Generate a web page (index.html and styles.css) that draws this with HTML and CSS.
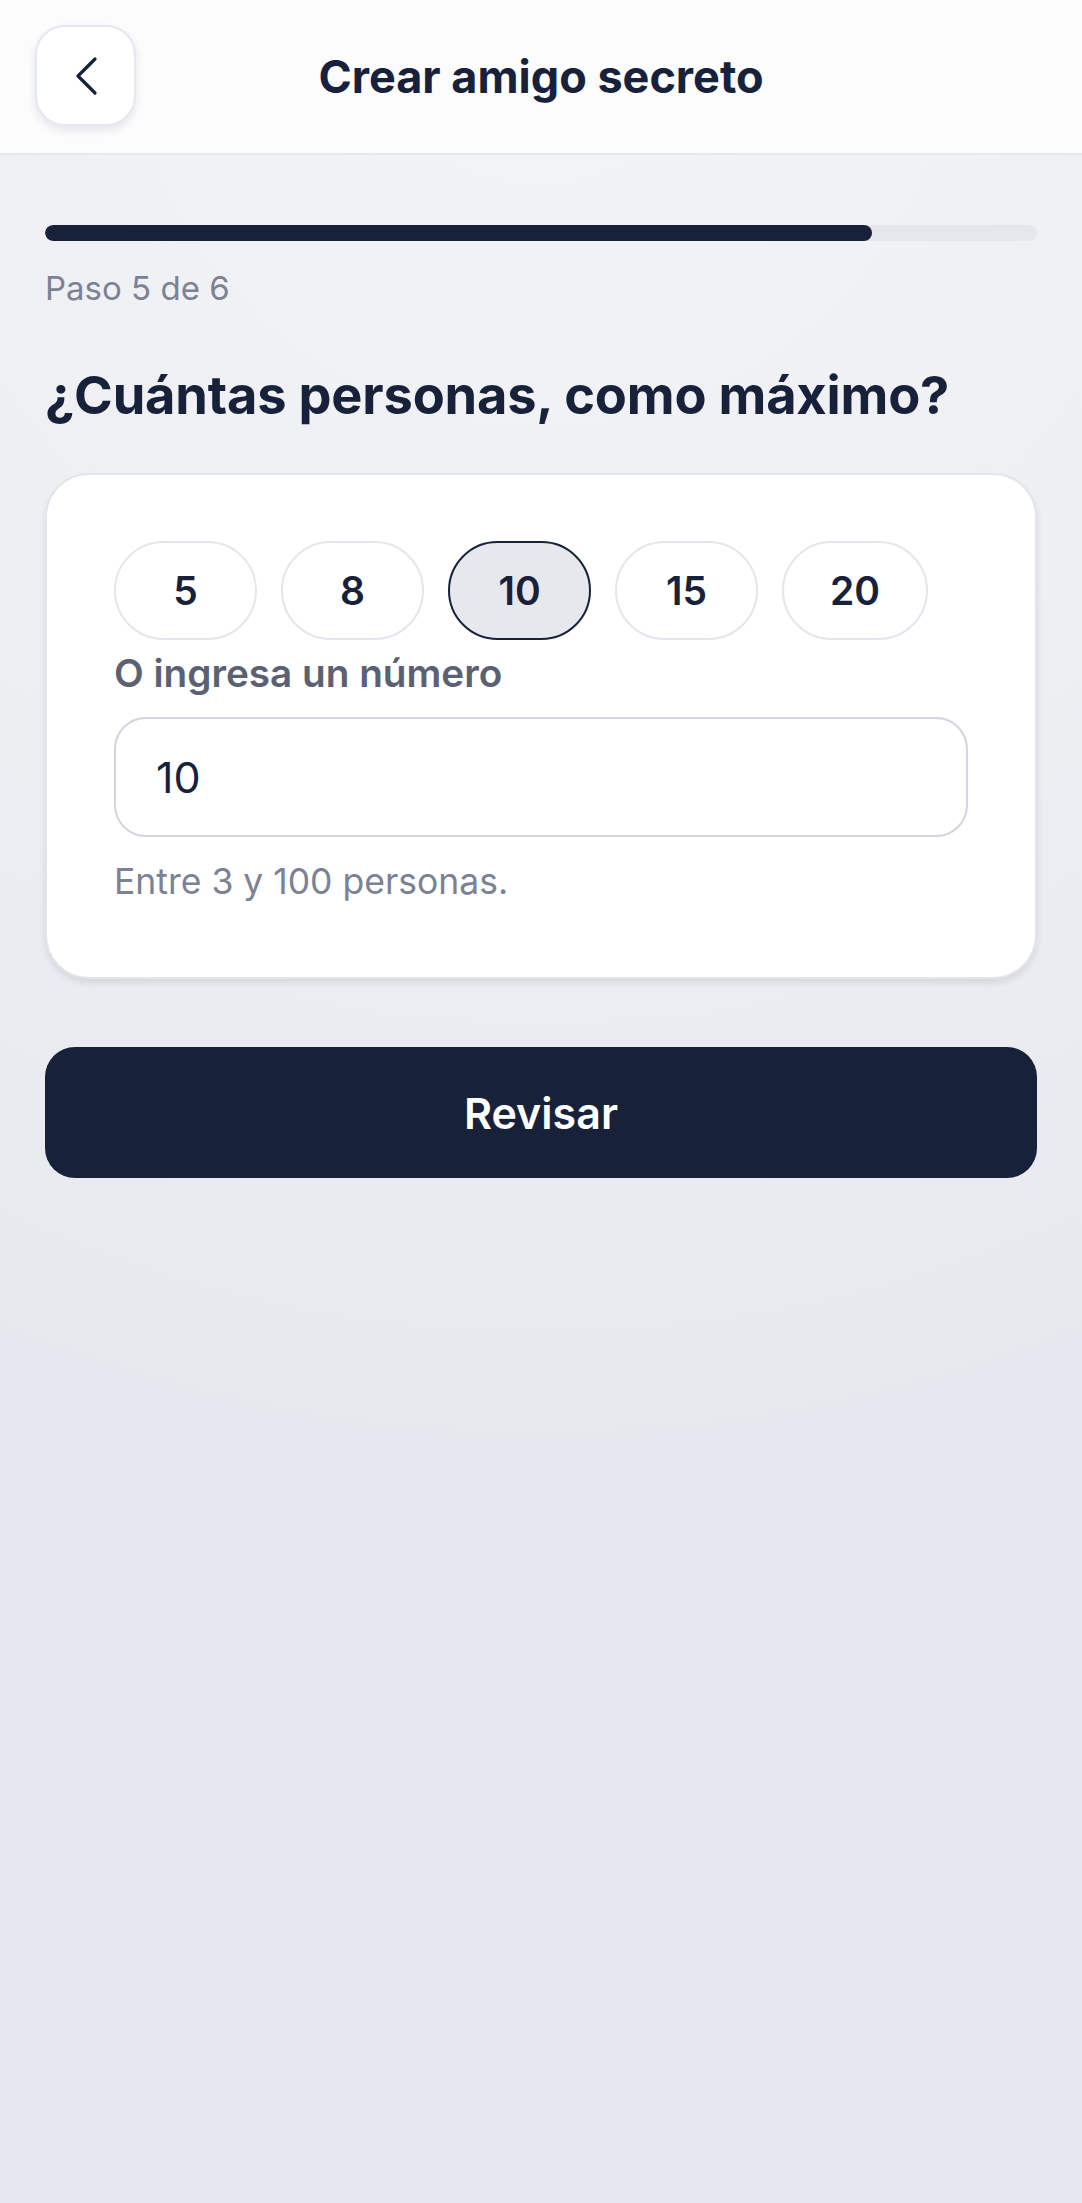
FILE: index.html
```html
<!DOCTYPE html>
<html lang="es">
<head>
    <meta charset="UTF-8">
    <meta name="viewport" content="width=device-width, initial-scale=1.0">
    <title>Crear amigo secreto</title>
    <link rel="stylesheet" href="styles.css">
</head>
<body>
    <header class="topbar">
        <button class="back-btn" type="button" aria-label="Volver">
            <svg width="30" height="40" viewBox="0 0 30 40" fill="none">
                <path d="M24 3 L7 20 L24 37" stroke="#18213a" stroke-width="3.2" stroke-linecap="round" stroke-linejoin="round"/>
            </svg>
        </button>
        <h1 class="topbar-title">Crear amigo secreto</h1>
        <span class="spacer"></span>
    </header>

    <main class="content">
        <!-- Progress -->
        <div class="progress">
            <div class="progress-fill" style="width: 83.33%"></div>
        </div>
        <p class="step">Paso 5 de 6</p>

        <h2 class="question">¿Cuántas personas, como máximo?</h2>

        <section class="card">
            <div class="chips">
                <button class="chip" type="button">5</button>
                <button class="chip" type="button">8</button>
                <button class="chip selected" type="button">10</button>
                <button class="chip" type="button">15</button>
                <button class="chip" type="button">20</button>
            </div>
            <label class="field-label" for="max">O ingresa un número</label>
            <input class="field-input" id="max" type="text" value="10">
            <p class="hint">Entre 3 y 100 personas.</p>
        </section>

        <button class="primary-btn" type="button">Revisar</button>
    </main>
</body>
</html>
```

FILE: styles.css
```css
* {
    box-sizing: border-box;
}
body {
    margin: 0;
    min-height: 2203px;
    font-family: Inter, "Noto Sans", sans-serif;
    color: #18213a;
    background-color: #e4e7ef;
    background-image: radial-gradient(ellipse 1440px 1460px at 50% 0%, #f3f4f7 0%, #eeeff3 55%, #e8e9ee 97%, #e4e7ef 100%);
    background-repeat: no-repeat;
}
.topbar {
    height: 155px;
    padding: 0 35px;
    display: grid;
    grid-template-columns: 101px 1fr 101px;
    align-items: center;
    background-color: #fcfcfd;
    border-bottom: 2px solid #e5e7ec;
}
.back-btn {
    width: 101px;
    height: 101px;
    border-radius: 30px;
    border: 2px solid #e6e8ef;
    background-color: #fff;
    box-shadow: 0 4px 8px rgba(24, 33, 58, 0.10);
    display: flex;
    align-items: center;
    justify-content: center;
    padding: 0;
    margin-top: -2px;
}
.topbar-title {
    margin: 0;
    text-align: center;
    font-size: 45px;
    font-weight: 700;
    color: #18213a;
}
.content {
    padding: 0 45px;
}
.progress {
    margin-top: 70px;
    height: 16px;
    border-radius: 8px;
    background-color: #e6e7ec;
    overflow: hidden;
}
.progress-fill {
    height: 100%;
    border-radius: 8px;
    background-color: #18213a;
}
.step {
    margin: 27px 0 0;
    line-height: 40px;
    font-size: 33px;
    color: #7c8293;
}
.question {
    margin: 57px 0 0;
    line-height: 60px;
    font-size: 52.4px;
    font-weight: 700;
    letter-spacing: -0.2px;
    color: #18213a;
}
.card {
    margin-top: 48px;
    padding: 66px 67px 75px;
    background-color: #fff;
    border: 2px solid #e3e5eb;
    border-radius: 44px;
    box-shadow: 0 4px 6px rgba(24, 33, 58, 0.10);
}
.chips {
    display: flex;
    gap: 24px;
}
.chip {
    width: 143px;
    height: 99px;
    border-radius: 50px;
    border: 2px solid #e4e6eb;
    background-color: #fff;
    font-family: inherit;
    font-size: 39px;
    font-weight: 600;
    color: #18213a;
    padding: 0;
}
.chip:last-child {
    width: 146px;
}
.chip.selected {
    background-color: #e6e8ee;
    border-color: #18213a;
}
.field-label {
    display: block;
    margin-top: 13px;
    line-height: 40px;
    font-size: 38.7px;
    font-weight: 600;
    color: #5b6173;
}
.field-input {
    display: block;
    width: 100%;
    height: 120px;
    margin-top: 24px;
    padding: 0 40px;
    border: 2px solid #d2d4de;
    border-radius: 32px;
    font-family: inherit;
    font-size: 43px;
    color: #18213a;
    background-color: #fff;
    outline: none;
}
.hint {
    margin: 25px 0 0;
    line-height: 40px;
    font-size: 35.5px;
    color: #7c8293;
}
.primary-btn {
    display: block;
    width: 100%;
    height: 131px;
    margin-top: 68px;
    border: none;
    border-radius: 30px;
    background-color: #18213a;
    color: #fff;
    font-family: inherit;
    font-size: 43px;
    font-weight: 600;
    cursor: pointer;
}
```
